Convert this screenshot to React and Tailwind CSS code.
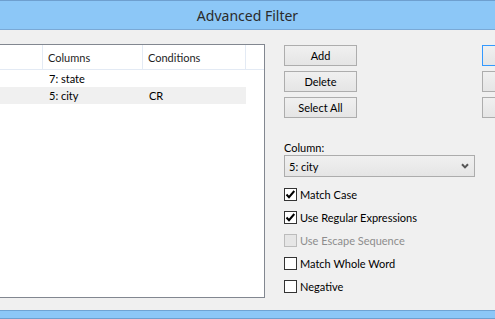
import React from 'react';

const filas = [
  { columna: '7: state', condicion: '', seleccionada: false },
  { columna: '5: city', condicion: 'CR', seleccionada: true }
];

const opciones = [
  { texto: 'Match Case', marcada: true },
  { texto: 'Use Regular Expressions', marcada: true },
  { texto: 'Use Escape Sequence', deshabilitada: true },
  { texto: 'Match Whole Word' },
  { texto: 'Negative' }
];

const Boton = ({ children, enfocado }) => (
  <div
    className={[
      'flex h-[21px] w-[73px] shrink-0 items-center justify-center border bg-gradient-to-b from-[#f0f0f0] to-[#e5e5e5] text-black',
      enfocado ? 'border-[#3399ff]' : 'border-[#adadad]'
    ].join(' ')}
  >
    {children}
  </div>
);

const Casilla = ({ texto, marcada, deshabilitada }) => (
  <div className="flex h-[17px] items-center gap-[3px]">
    <div
      className={[
        'flex h-[13px] w-[13px] items-center justify-center border',
        deshabilitada ? 'border-[#bcbcbc] bg-[#e6e6e6]' : 'border-[#333333] bg-white'
      ].join(' ')}
    >
      {marcada && (
        <svg width="11" height="11" viewBox="0 0 11 11">
          <path d="M1.5 5.5 L4 8.2 L9.3 2" fill="none" stroke="#000" strokeWidth="2" />
        </svg>
      )}
    </div>
    <span className={deshabilitada ? 'text-[#8d8d8d]' : 'text-black'}>{texto}</span>
  </div>
);

const App = () => {
  return (
    <div
      className="flex h-[319px] w-[495px] flex-col overflow-hidden bg-[#f0f0f0] text-[11px] leading-[15px]"
      style={{ fontFamily: 'Lato, "Noto Sans", sans-serif' }}
    >
      <header
        className="flex h-[30px] shrink-0 items-center justify-center border-y border-t-[#6e9fcf] border-b-[#7aa9d6] bg-[#8cc7f7] text-[14px] text-[#2b2b2b]"
        style={{ fontFamily: '"Noto Sans", sans-serif' }}
      >
        Advanced Filter
      </header>

      <div className="flex h-[280px] shrink-0">
        <div className="mt-[14px] h-[254px] w-[265px] shrink-0 border border-l-0 border-[#828790] bg-white">
          <div className="flex h-[25px] border-b border-[#e3eaf4] text-[#1e1e1e]">
            <div className="w-[43px] border-r border-[#e3eaf4]" />
            <div className="flex w-[100px] items-center border-r border-[#e3eaf4] pl-[5px]">Columns</div>
            <div className="flex w-[103px] items-center border-r border-[#e3eaf4] pl-[5px]">Conditions</div>
          </div>
          {filas.map((fila) => (
            <div
              key={fila.columna}
              className={['flex h-[17px] w-[246px] items-center', fila.seleccionada ? 'bg-[#f0f0f0]' : ''].join(' ')}
            >
              <div className="w-[43px]" />
              <div className="w-[100px] pl-[6px]">{fila.columna}</div>
              <div className="w-[103px] pl-[6px]">{fila.condicion}</div>
            </div>
          ))}
        </div>

        <div className="ml-[19px] flex w-[191px] shrink-0 flex-col pt-[15px]">
          <div className="flex flex-col gap-[5px]">
            <Boton>Add</Boton>
            <Boton>Delete</Boton>
            <Boton>Select All</Boton>
          </div>
          <label className="mt-[22px] text-black">Column:</label>
          <div className="flex h-[22px] w-[191px] items-center justify-between border border-[#acacac] bg-gradient-to-b from-[#f0f0f0] to-[#e5e5e5] pl-[4px] pr-[5px]">
            <span>5: city</span>
            <svg width="8" height="6" viewBox="0 0 8 6">
              <path d="M1 1.2 L4 4.4 L7 1.2" fill="none" stroke="#555" strokeWidth="2" />
            </svg>
          </div>
          <div className="mt-[9px] flex flex-col gap-[6px]">
            {opciones.map((op) => (
              <Casilla key={op.texto} {...op} />
            ))}
          </div>
        </div>

        <div className="ml-[7px] flex shrink-0 flex-col gap-[5px] pt-[15px]">
          <Boton enfocado />
          <Boton />
          <Boton />
        </div>
      </div>

      <div className="h-[9px] shrink-0 border-y border-t-[#6fa3d3] border-b-[#6e9fcf] bg-[#8cc7f7]" />
    </div>
  );
};

export default App;
